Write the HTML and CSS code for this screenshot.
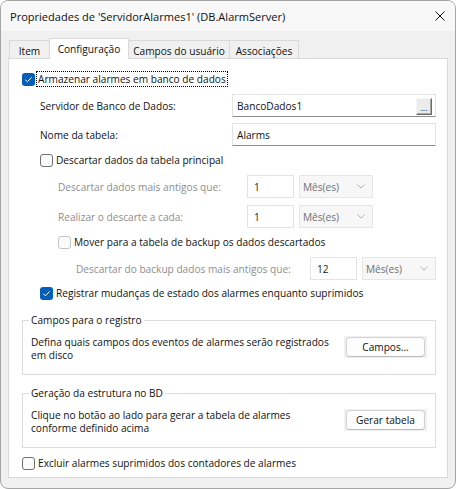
FILE: index.html
```html
<!DOCTYPE html>
<html lang="pt-BR">
<head>
<meta charset="utf-8">
<title>Propriedades de 'ServidorAlarmes1'</title>
<link rel="stylesheet" href="styles.css">
</head>
<body>
<div class="window">
  <div class="titlebar">
    <span class="title">Propriedades de 'ServidorAlarmes1' (DB.AlarmServer)</span>
    <svg class="close" width="10" height="10" viewBox="0 0 10 10"><path d="M0.5 0.5L9.5 9.5M9.5 0.5L0.5 9.5" stroke="#1a1a1a" stroke-width="1" fill="none"/></svg>
  </div>
  <div class="content">
    <div class="tabs">
      <div class="tab w-item">Item</div>
      <div class="tab active w-config">Configuração</div>
      <div class="tab w-campos">Campos do usuário</div>
      <div class="tab w-assoc">Associações</div>
    </div>
    <div class="panel">
      <div class="row cbrow">
        <svg class="cb" width="13" height="13" viewBox="0 0 13 13"><rect width="13" height="13" rx="3" fill="#005fb8"/><path d="M3.3 6.7l2.1 2.1 4.3-4.5" fill="none" stroke="#fff" stroke-width="1"/></svg>
        <span class="cblabel focus">Armazenar alarmes em banco de dados</span>
      </div>

      <div class="row field r2 ind1">
        <span class="lbl w192">Servidor de Banco de Dados:</span>
        <div class="input w204">
          <span class="val">BancoDados1</span>
          <span class="dots">...</span>
        </div>
      </div>

      <div class="row field r3 ind1">
        <span class="lbl w192">Nome da tabela:</span>
        <div class="input w204"><span class="val">Alarms</span></div>
      </div>

      <div class="row cbrow r4 ind1">
        <svg class="cb" width="13" height="13" viewBox="0 0 13 13"><rect x="0.5" y="0.5" width="12" height="12" rx="2.5" fill="#fbfbfb" stroke="#707070"/></svg>
        <span class="cblabel">Descartar dados da tabela principal</span>
      </div>

      <div class="row field r5 ind2">
        <span class="lbl dis w189">Descartar dados mais antigos que:</span>
        <div class="input dinput"><span class="val">1</span></div>
        <div class="select"><span>Mês(es)</span><svg width="8" height="5" viewBox="0 0 8 5"><path d="M0.5 0.5L4 4L7.5 0.5" fill="none" stroke="#b5b5b5"/></svg></div>
      </div>

      <div class="row field r6 ind2">
        <span class="lbl dis w189">Realizar o descarte a cada:</span>
        <div class="input dinput"><span class="val">1</span></div>
        <div class="select"><span>Mês(es)</span><svg width="8" height="5" viewBox="0 0 8 5"><path d="M0.5 0.5L4 4L7.5 0.5" fill="none" stroke="#b5b5b5"/></svg></div>
      </div>

      <div class="row cbrow r7 ind2">
        <svg class="cb" width="13" height="13" viewBox="0 0 13 13"><rect x="0.5" y="0.5" width="12" height="12" rx="2.5" fill="#fbfbfb" stroke="#c4c4c4"/></svg>
        <span class="cblabel">Mover para a tabela de backup os dados descartados</span>
      </div>

      <div class="row field r8 ind3">
        <span class="lbl dis w234">Descartar do backup dados mais antigos que:</span>
        <div class="input dinput"><span class="val">12</span></div>
        <div class="select"><span>Mês(es)</span><svg width="8" height="5" viewBox="0 0 8 5"><path d="M0.5 0.5L4 4L7.5 0.5" fill="none" stroke="#b5b5b5"/></svg></div>
      </div>

      <div class="row cbrow r9 ind1">
        <svg class="cb" width="13" height="13" viewBox="0 0 13 13"><rect width="13" height="13" rx="3" fill="#005fb8"/><path d="M3.3 6.7l2.1 2.1 4.3-4.5" fill="none" stroke="#fff" stroke-width="1"/></svg>
        <span class="cblabel">Registrar mudanças de estado dos alarmes enquanto suprimidos</span>
      </div>

      <fieldset class="group g1">
        <legend>Campos para o registro</legend>
        <div class="grow">
          <p class="gtext">Defina quais campos dos eventos de alarmes serão registrados<br>em disco</p>
          <div class="btnwrap"><button class="btn" type="button">Campos...</button></div>
        </div>
      </fieldset>

      <fieldset class="group g2">
        <legend>Geração da estrutura no BD</legend>
        <div class="grow">
          <p class="gtext">Clique no botão ao lado para gerar a tabela de alarmes<br>conforme definido acima</p>
          <div class="btnwrap"><button class="btn" type="button">Gerar tabela</button></div>
        </div>
      </fieldset>

      <div class="row cbrow r10">
        <svg class="cb" width="13" height="13" viewBox="0 0 13 13"><rect x="0.5" y="0.5" width="12" height="12" rx="2.5" fill="#fbfbfb" stroke="#707070"/></svg>
        <span class="cblabel">Excluir alarmes suprimidos dos contadores de alarmes</span>
      </div>
    </div>
  </div>
</div>
</body>
</html>
```

FILE: styles.css
```css
* { box-sizing: border-box; }
html, body { margin: 0; padding: 0; background: #ffffff; }
body {
  font-family: "Open Sans", "Noto Sans", sans-serif;
  font-size: 10.15px;
  color: #111111;
}

.window {
  width: 456px;
  height: 489px;
  border: 1px solid #a5a5a5;
  border-radius: 8px;
  background: #f0f0f0;
  overflow: hidden;
  display: flex;
  flex-direction: column;
}

.titlebar {
  height: 30px;
  flex: none;
  display: flex;
  align-items: center;
  justify-content: space-between;
  padding: 0 10px 0 9px;
  background: #f8f8f8;
}
.title { font-size: 11.05px; color: #111; }
.close { display: block; }

.content { flex: 1; padding: 7px 7px 0 7px; }

.tabs {
  display: flex;
  align-items: flex-end;
  height: 20px;
  padding-left: 1px;
}
.tab {
  height: 18px;
  border: 1px solid #d9d9d9;
  border-bottom: none;
  background: #f0f0f0;
  margin-left: -1px;
  display: flex;
  align-items: center;
  justify-content: center;
  padding-top: 2px;
  white-space: nowrap;
}
.tab:first-child { margin-left: 0; }
.tab.active {
  height: 21px;
  margin-bottom: -1px;
  background: #ffffff;
  position: relative;
  z-index: 1;
  padding-top: 0;
  padding-bottom: 1px;
}
.w-item { width: 41px; }
.w-config { width: 80px; }
.w-campos { width: 102px; }
.w-assoc { width: 70px; }

.panel {
  width: 440px;
  height: 420px;
  border: 1px solid #d9d9d9;
  background: #ffffff;
  padding: 12px 0 0 13px;
}

.row { display: flex; align-items: center; white-space: nowrap; }
.cbrow { height: 16px; }
.field { height: 23px; }
.ind1 { margin-left: 18px; }
.ind2 { margin-left: 36px; }
.ind3 { margin-left: 54px; }

.r2 { margin-top: 7px; }
.r3 { margin-top: 6px; }
.r4 { margin-top: 6px; }
.r5 { margin-top: 7px; }
.r6 { margin-top: 7px; }
.r7 { margin-top: 6px; }
.r8 { margin-top: 7px; }
.r9 { margin-top: 5px; }
.r10 { margin-top: 7px; }

.cb { display: block; flex: none; }
.cblabel {
  margin-left: 1px;
  padding: 0 1px;
  line-height: 14px;
  border: 1px solid transparent;
}
.cblabel.focus { border: 1px dotted #000000; }

.lbl { flex: none; }
.lbl.dis { color: #8e8e8e; }
.w192 { width: 192px; }
.w189 { width: 189px; }
.w234 { width: 234px; }

.input {
  height: 23px;
  display: flex;
  align-items: center;
  border: 1px solid #e3e3e3;
  border-bottom-color: #8a8a8a;
  background: #ffffff;
  padding: 0 3px 0 4px;
  flex: none;
}
.w204 { width: 204px; }
.val { flex: 1; }

.dinput {
  width: 47px;
  border-bottom-color: #e3e3e3;
  padding-left: 6px;
  color: #222;
}

.dots {
  width: 16px;
  height: 17px;
  margin-top: 1px;
  background: #ececec;
  border: 1px solid;
  border-color: #f6f6f6 #6a6a6a #6a6a6a #f6f6f6;
  box-shadow: inset -1px -1px 0 #a8a8a8;
  font-size: 9px;
  line-height: 1;
  display: flex;
  align-items: flex-end;
  justify-content: center;
  padding-bottom: 2px;
  color: #111;
}

.select {
  width: 74px;
  height: 23px;
  margin-left: 5px;
  display: flex;
  align-items: center;
  justify-content: space-between;
  border: 1px solid #e6e6e6;
  background: #f7f7f7;
  padding: 0 7px 0 3px;
  color: #707070;
}
.select svg { display: block; }

.group {
  width: 414px;
  margin: 0;
  padding: 8px 8px 12px 8px;
  border: 1px solid #dcdcdc;
  min-inline-size: 0;
}
.g1 { margin-top: 12px; }
.g2 { margin-top: 11px; }
.group legend {
  padding: 0 2px;
  margin-left: -2px;
  line-height: 15px;
}
.grow {
  display: flex;
  justify-content: space-between;
  align-items: flex-start;
}
.gtext {
  margin: 0;
  line-height: 13px;
}
.btnwrap {
  width: 83px;
  height: 22px;
  padding: 1px 2px;
  background: #f0f0f0;
  flex: none;
}
.btn {
  display: block;
  width: 79px;
  height: 20px;
  margin: 0;
  padding: 0;
  border: 1px solid #d2d2d2;
  border-bottom-color: #bcbcbc;
  border-radius: 4px;
  background: #fdfdfd;
  font-family: inherit;
  font-size: inherit;
  color: #111;
}
```
